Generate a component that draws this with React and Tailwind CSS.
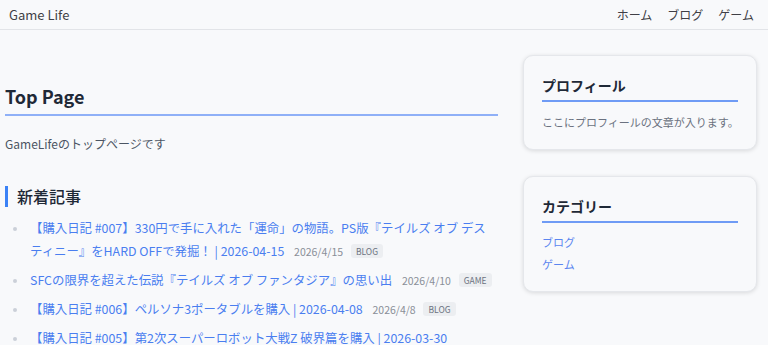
const posts = [
  {
    title: "【購入日記 #007】330円で手に入れた「運命」の物語。PS版『テイルズ オブ デスティニー』をHARD OFFで発掘！ | 2026-04-15",
    date: "2026/4/15",
    tag: "BLOG",
  },
  {
    title: "SFCの限界を超えた伝説『テイルズ オブ ファンタジア』の思い出",
    date: "2026/4/10",
    tag: "GAME",
  },
  {
    title: "【購入日記 #006】ペルソナ3ポータブルを購入 | 2026-04-08",
    date: "2026/4/8",
    tag: "BLOG",
  },
  {
    title: "【購入日記 #005】第2次スーパーロボット大戦Z 破界篇を購入 | 2026-03-30",
    date: "2026/3/30",
    tag: "BLOG",
  },
];

function Header() {
  return (
    <header className="h-[30px] flex items-center justify-between pl-[9px] pr-[14px] border-b border-[#e2e4e8] bg-[#f8f9fb]">
      <a className="text-[13px] text-[#3f3f46]">Game Life</a>
      <nav className="flex gap-[15px] text-[12px] text-[#3f3f46]">
        <a>ホーム</a>
        <a>ブログ</a>
        <a>ゲーム</a>
      </nav>
    </header>
  );
}

function Card({ title, children }) {
  return (
    <div className="bg-[#f8f9fb] border border-[#e5e7eb] rounded-[10px] shadow-[0_1px_4px_rgba(0,0,0,0.13)] px-[18px] pt-[19px] pb-[18px]">
      <h2 className="text-[14px] leading-[20px] font-bold text-[#1f2937] pb-[5px] border-b-2 border-[#6f9bf5]">
        {title}
      </h2>
      {children}
    </div>
  );
}

export default function App() {
  return (
    <div
      className="min-h-screen bg-[#f8f9fb]"
      style={{ fontFamily: '"Noto Sans CJK JP", "Noto Sans", sans-serif' }}
    >
      <Header />
      <div className="flex pl-[5px] pr-[11px] pt-[25px] gap-[25px]">
        <main className="w-[493px] shrink-0">
          <h1 className="mt-[28px] text-[18px] leading-[27px] font-bold text-[#1f2937] pb-[4px] border-b-2 border-[#8fb0f7]">
            Top Page
          </h1>
          <p className="mt-[18px] text-[12px] leading-[20px] text-[#4b5563]">
            GameLifeのトップページです
          </p>

          <h2 className="mt-[32px] border-l-[3px] border-[#3b82f6] pl-[9px] text-[16px] leading-[21px] font-medium text-[#1f2937]">
            新着記事
          </h2>
          <ul className="mt-[10px] flex flex-col gap-[6px]">
            {posts.map((p) => (
              <li key={p.title} className="flex text-[12.4px] leading-[23px]">
                <span className="w-[25px] shrink-0 h-[23px] flex items-center pl-[8px]">
                  <span className="w-[4px] h-[4px] rounded-full bg-[#cbd0d8]"></span>
                </span>
                <div className="min-w-0">
                  <a className="text-[#4a7ef0]">{p.title}</a>{" "}
                  <span className="ml-[7px] text-[10.5px] text-[#8a8f98]">{p.date}</span>{" "}
                  <span className="ml-[5px] inline-block px-[5px] leading-[14px] rounded-[3px] bg-[#eceef1] text-[8.5px] text-[#6b7280] align-[1px]">
                    {p.tag}
                  </span>
                </div>
              </li>
            ))}
          </ul>
        </main>

        <aside className="w-[234px] shrink-0 flex flex-col gap-[26px]">
          <Card title="プロフィール">
            <p className="mt-[12px] text-[11px] leading-[17px] text-[#6b7280] whitespace-nowrap">
              ここにプロフィールの文章が入ります。
            </p>
          </Card>
          <Card title="カテゴリー">
            <ul className="mt-[11px] flex flex-col gap-[5px] text-[11px] leading-[17px] text-[#5b86f0]">
              <li>ブログ</li>
              <li>ゲーム</li>
            </ul>
          </Card>
        </aside>
      </div>
    </div>
  );
}
